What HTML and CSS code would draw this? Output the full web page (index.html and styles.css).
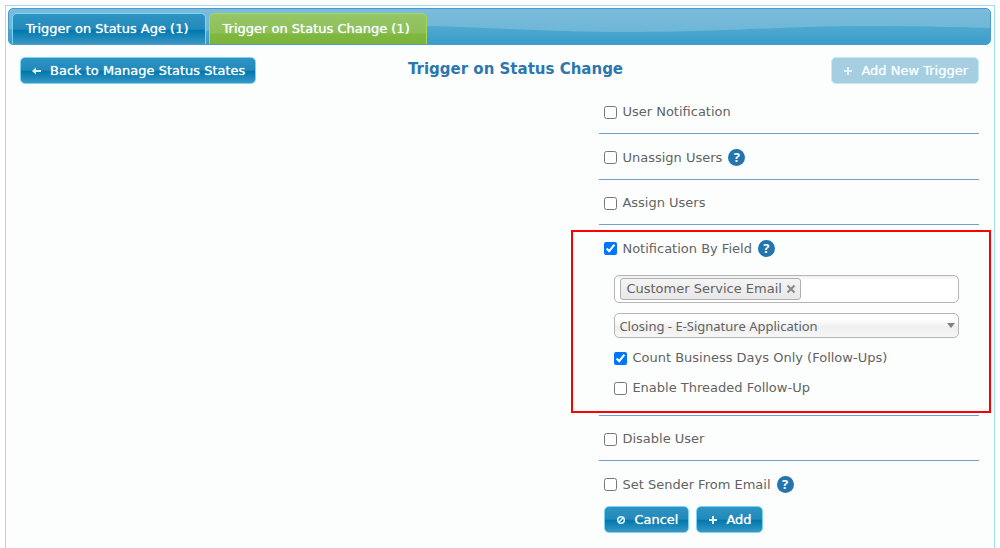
FILE: index.html
```html
<!DOCTYPE html>
<html lang="en">
<head>
    <meta charset="UTF-8">
    <meta name="viewport" content="width=device-width, initial-scale=1.0">
    <title>Trigger on Status Change</title>
    <link rel="stylesheet" href="styles.css">
</head>
<body>
    <div class="panel">
        <nav class="tabs">
            <svg class="tabs-wave" viewBox="0 0 980 35" preserveAspectRatio="none" aria-hidden="true">
                <defs>
                    <linearGradient id="wave" x1="0" y1="0" x2="0" y2="1">
                        <stop offset="0" stop-color="#4faacf"/>
                        <stop offset="1" stop-color="#3b9dca"/>
                    </linearGradient>
                </defs>
                <path fill="url(#wave)" d="M0 20 C60 23 110 24 150 23 C240 21 320 17 400 17 C470 17 520 23 620 23 C720 23 770 17 860 17 C910 17 950 18 980 19 V35 H0 Z"/>
            </svg>
            <a class="tab" href="#status-age">Trigger on Status Age (1)</a>
            <a class="tab tab-active" href="#status-change">Trigger on Status Change (1)</a>
        </nav>

        <div class="content">
            <div class="toolbar">
                <button class="button" type="button">
                    <svg class="icon" viewBox="0 0 10 10" aria-hidden="true"><path d="M0 5 L4 1.5 V4 H9 V6 H4 V8.5 Z"/></svg>
                    Back to Manage Status States
                </button>
                <h1>Trigger on Status Change</h1>
                <button class="button button-add-new" type="button" disabled>
                    <svg class="icon" viewBox="0 0 10 10" aria-hidden="true"><path d="M4 1 H6 V4 H9 V6 H6 V9 H4 V6 H1 V4 H4 Z"/></svg>
                    Add New Trigger
                </button>
            </div>

            <form class="trigger-form">
                <div class="row">
                    <label class="check"><input type="checkbox"> User Notification</label>
                </div>
                <div class="row">
                    <label class="check"><input type="checkbox"> Unassign Users</label>
                    <a class="help" href="#help-unassign" aria-label="Help">?</a>
                </div>
                <div class="row">
                    <label class="check"><input type="checkbox"> Assign Users</label>
                </div>
                <div class="row row-field">
                    <div class="row-title">
                        <label class="check"><input type="checkbox" checked> Notification By Field</label>
                        <a class="help" href="#help-field" aria-label="Help">?</a>
                    </div>
                    <div class="field-options">
                        <div class="chosen-multi">
                            <span class="token">Customer Service Email
                                <button class="token-close" type="button" aria-label="Remove">
                                    <svg viewBox="0 0 10 10" aria-hidden="true"><path d="M1.5 1.5 L8.5 8.5 M8.5 1.5 L1.5 8.5"/></svg>
                                </button>
                            </span>
                            <input class="token-input" type="text" aria-label="Notification fields">
                        </div>
                        <div class="chosen-single">
                            <select aria-label="Email template">
                                <option>Closing - E-Signature Application</option>
                            </select>
                        </div>
                        <label class="check"><input type="checkbox" checked> Count Business Days Only (Follow-Ups)</label>
                        <label class="check"><input type="checkbox"> Enable Threaded Follow-Up</label>
                    </div>
                    <div class="highlight"></div>
                </div>
                <div class="row">
                    <label class="check"><input type="checkbox"> Disable User</label>
                </div>
                <div class="row row-last">
                    <label class="check"><input type="checkbox"> Set Sender From Email</label>
                    <a class="help" href="#help-sender" aria-label="Help">?</a>
                </div>
                <div class="actions">
                    <button class="button" type="button">
                        <svg class="icon icon-cancel" viewBox="0 0 10 10" aria-hidden="true"><circle cx="5" cy="5" r="3.3"/><path d="M3 7 L7 3"/></svg>
                        Cancel
                    </button>
                    <button class="button" type="button">
                        <svg class="icon" viewBox="0 0 10 10" aria-hidden="true"><path d="M4 1 H6 V4 H9 V6 H6 V9 H4 V6 H1 V4 H4 Z"/></svg>
                        Add
                    </button>
                </div>
            </form>
        </div>
    </div>
</body>
</html>
```
FILE: styles.css
```css
* {
    box-sizing: border-box;
}
body {
    font-family: Verdana, "DejaVu Sans", sans-serif;
    font-size: 13px;
    line-height: 16px;
    color: #636363;
    background-color: #fff;
    margin: 0;
    padding: 5px 5px 0;
}
.panel {
    min-height: calc(100vh - 5px);
    padding: 2px 3px 2px 2px;
    border: 1px solid #9cdcf5;
    border-bottom: none;
    background-color: #fcfefe;
}
.tabs {
    position: relative;
    display: flex;
    gap: 3px;
    padding: 4px 3px 0;
    border: 1px solid #4a9ad0;
    border-radius: 5px;
    background: linear-gradient(#7cbbdb, #66b4d5);
    overflow: hidden;
}
.tabs-wave {
    position: absolute;
    top: 0;
    left: 0;
    width: 100%;
    height: 100%;
}
.tab {
    position: relative;
    padding: 7px 16px 7px 13px;
    border: 1px solid #77d5f7;
    border-bottom: none;
    border-radius: 5px 5px 0 0;
    color: #fff;
    text-decoration: none;
    text-shadow: 0 0 1px #d8eef8;
    background: linear-gradient(#2e94c3, #2389ba 50%, #0078ae 55%, #3a97c4);
}
.tab-active {
    border-color: #a5d856;
    background: linear-gradient(#97c568, #8ec057 62%, #7fb840 68%, #7bb33b);
}
.content {
    padding: 12px 12px 0;
}
.toolbar {
    display: grid;
    grid-template-columns: 1fr auto 1fr;
    align-items: center;
}
h1 {
    margin: 0;
    padding: 0 0 4px 32px;
    font-size: 15px;
    color: #2c77ae;
}
.button {
    display: flex;
    align-items: center;
    justify-self: start;
    gap: 8px;
    padding: 5px 10px 4px 11px;
    border: 1px solid #77d5f7;
    border-radius: 5px;
    font: inherit;
    color: #fff;
    text-shadow: 0 0 1px #d8eef8;
    background: linear-gradient(#2e94c3, #2389ba 48%, #0078ae 54%, #3a97c4);
    cursor: pointer;
}
.button-add-new {
    justify-self: end;
    border-color: #c4ebf6;
    background: #a5cfe1;
    cursor: default;
}
.icon {
    width: 10px;
    height: 10px;
    fill: #e0f4fc;
}
.icon-cancel {
    fill: none;
    stroke: #e0f4fc;
    stroke-width: 1.6;
}
.trigger-form {
    width: calc(40% - 4px);
    margin: 5px 0 0 auto;
}
.row {
    position: relative;
    display: flex;
    align-items: center;
    gap: 6px;
    padding: 15px 5px 13px;
    border-bottom: 1px solid #6f9fd0;
}
.check {
    display: flex;
    align-items: center;
    gap: 5px;
}
.check input {
    width: 13px;
    height: 13px;
    margin: 0;
}
.help {
    width: 17px;
    height: 17px;
    border-radius: 50%;
    background-color: #2474ae;
    color: #fff;
    font: bold 13px/17px "Open Sans", sans-serif;
    text-align: center;
    text-decoration: none;
}
.row-field {
    display: block;
    padding-bottom: 19px;
}
.row-title {
    display: flex;
    align-items: center;
    gap: 6px;
}
.field-options {
    padding: 18px 15px 0 10px;
}
.chosen-multi {
    display: flex;
    align-items: center;
    height: 28px;
    padding: 0 5px;
    border: 1px solid #b5b5b5;
    border-radius: 5px;
    background: linear-gradient(#eee, #fff 4px);
}
.token {
    display: flex;
    align-items: center;
    gap: 4px;
    padding: 2px 4px 2px 5px;
    border: 1px solid #b0b0b0;
    border-radius: 3px;
    background: linear-gradient(#f4f4f4, #e8e8e8);
}
.token-close {
    display: flex;
    padding: 0;
    border: none;
    background: none;
}
.token-close svg {
    width: 10px;
    height: 10px;
    stroke: #888;
    stroke-width: 2;
}
.token-input {
    flex: 1;
    min-width: 0;
    border: none;
    outline: none;
    background: none;
}
.chosen-single {
    position: relative;
    margin: 10px 0 12px;
}
.chosen-single select {
    display: block;
    appearance: none;
    width: 100%;
    height: 25px;
    padding: 0 20px 0 4px;
    border: 1px solid #b5b5b5;
    border-radius: 5px;
    font: 13px "Noto Sans", sans-serif;
    color: #636363;
    background: linear-gradient(#fff 20%, #f4f4f4 50%, #eee 52%, #f6f6f6);
}
.chosen-single::after {
    content: "";
    position: absolute;
    top: 10px;
    right: 4px;
    border: 4px solid transparent;
    border-top: 5px solid #808080;
    border-bottom: none;
}
.field-options .check + .check {
    margin-top: 14px;
}
.highlight {
    position: absolute;
    top: 5px;
    right: -12px;
    bottom: 2px;
    left: -28px;
    border: 2px solid #f00;
    pointer-events: none;
}
.row-last {
    padding-bottom: 13px;
    border-bottom: none;
}
.actions {
    display: flex;
    gap: 7px;
    padding-left: 5px;
}
```
